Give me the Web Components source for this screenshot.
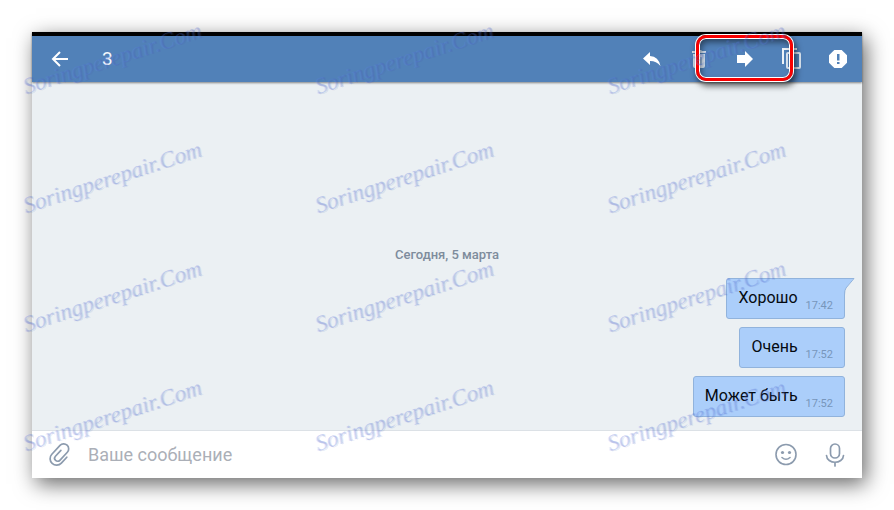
<!DOCTYPE html>
<html lang="ru">
<head>
<meta charset="utf-8">
<meta name="viewport" content="width=device-width, initial-scale=1">
<title>Сообщения</title>
<style>
body { margin: 0; background: #fff; font-family: Roboto, "Liberation Sans", sans-serif; }
</style>
</head>
<body>
<chat-app></chat-app>
<script>
const define = (name, html) => customElements.define(name, class extends HTMLElement {
  constructor() {
    super();
    const t = document.createElement('template');
    t.innerHTML = html;
    this.attachShadow({ mode: 'open' }).append(t.content.cloneNode(true));
  }
  connectedCallback() {
    const button = this.shadowRoot.querySelector('button');
    if (button && this.hasAttribute('label')) button.setAttribute('aria-label', this.getAttribute('label'));
  }
});

define('icon-button', `
<style>
:host { display: block; position: relative; width: 24px; height: 24px; }
button { display: block; width: 24px; height: 24px; padding: 0; border: 0; background: none; color: inherit; cursor: pointer; }
::slotted(svg) { display: block; width: 24px; height: 24px; overflow: visible; }
</style>
<button type="button"><slot></slot></button><slot name="over"></slot>`);

define('focus-ring', `
<style>
:host { position: absolute; z-index: 2; left: -37px; top: -12px; width: 97px; height: 46px; box-sizing: border-box;
  border: 3px solid #f80000; border-radius: 10px; pointer-events: none;
  box-shadow: 0 0 0 1px #fff, inset 0 0 0 1px #fff, 2px 4px 6px 1px rgba(0,0,0,.6), inset 2px 4px 6px rgba(0,0,0,.5); }
</style>`);

define('chat-toolbar', `
<style>
:host { display: block; position: relative; z-index: 1; border-top: 4px solid #000; background: #5181b8; color: #fff; box-shadow: 0 1px 2px rgba(0,0,0,.45); }
header { display: flex; align-items: center; height: 46px; padding: 0 12px 0 16px; }
.count { margin-left: 30px; font-size: 19px; line-height: 24px; color: #f4f8fc; }
nav { display: flex; justify-content: space-between; width: 210px; margin-left: auto; }
.faded { opacity: .75; }
</style>
<header>
  <icon-button label="Назад"><svg viewBox="0 0 24 24" fill="none" stroke="#fff" stroke-width="2"><path d="M20 12H5M12 5L5 12L12 19"/></svg></icon-button>
  <span class="count">3</span>
  <nav>
    <icon-button label="Ответить"><svg viewBox="0 0 24 24" fill="#fff"><path d="M10 5L3 11.5L10 18V14Q16 13.8 20.5 19Q18.5 9.5 10 9Z"/></svg></icon-button>
    <icon-button class="faded" label="Удалить"><svg viewBox="0 0 24 24"><path fill="#fff" d="M5 4h4l1-1h4l1 1h4v2H5zM6 7h12v12q0 2-2 2H8q-2 0-2-2z"/><path d="M9 10h6v8H9z" fill="#b5c8df"/></svg></icon-button>
    <icon-button label="Переслать"><svg viewBox="0 0 24 24" fill="#fff"><path d="M4 8h8V4l8 8-8 8v-4H4z"/></svg><focus-ring slot="over"></focus-ring></icon-button>
    <icon-button label="Копировать"><svg viewBox="0 0 24 24" fill="none" stroke="#fff"><path d="M3 17V2h14" stroke-width="2" opacity=".9"/><rect x="7" y="6" width="13" height="15" rx="1" stroke-width="2" opacity=".8"/></svg></icon-button>
    <icon-button label="Пожаловаться"><svg viewBox="0 0 24 24"><path fill="#fff" d="M8.300 3h7.400L21 8.300v7.400L15.700 21H8.300L3 15.700V8.300z"/><path fill="#5181b8" d="M11 7h2.500v6.500H11zM11 15h2.500v2H11z"/></svg></icon-button>
  </nav>
</header>`);

define('chat-date', `
<style>
:host { display: block; text-align: center; font-size: 13px; line-height: 16px; font-weight: 500; color: #7e8c9c; }
</style>
<slot></slot>`);

define('chat-message', `
<style>
:host { display: flex; position: relative; align-items: center; gap: 8px; height: 41px; box-sizing: border-box; padding: 0 11px 2px;
  border: 1px solid #91b3dc; border-radius: 3px; background: #abcefa; color: #050a10; font-size: 16px; line-height: 20px; }
time { align-self: flex-end; padding-bottom: 2px; font-size: 11px; line-height: 16px; color: #7796bb; }
svg { display: none; position: absolute; right: -11px; top: -1px; width: 12px; height: 17px; }
:host([tail]) svg { display: block; }
:host([tail]) { border-top-right-radius: 0; }
</style>
<span><slot></slot></span><time><slot name="time"></slot></time>
<svg viewBox="0 0 12 17"><path d="M0 0H11L3 10Q1.500 12 1.500 17H0Z" fill="#abcefa"/><path d="M0 .5H11L3 10Q1.500 12 1.500 17" fill="none" stroke="#91b3dc"/></svg>`);

define('chat-history', `
<style>
:host { display: flex; flex: 1; flex-direction: column; justify-content: flex-end; align-items: stretch; gap: 15px; padding: 16px 17px 13px; background: #ebf0f3; }
.list { display: flex; flex-direction: column; align-items: flex-end; gap: 8px; }
</style>
<slot name="date"></slot><div class="list"><slot></slot></div>`);

define('chat-composer', `
<style>
:host { display: block; border-top: 1px solid #dce1e6; background: #fff; color: #93a1b3; }
form { display: flex; align-items: center; height: 47px; padding: 0 15px 0 16px; }
label { flex: 1; min-width: 0; margin-left: 16px; }
input { display: block; box-sizing: border-box; width: 100%; padding: 0; border: 0; outline: 0; background: none; font: 18px/24px Roboto, "Liberation Sans", sans-serif; color: #222; }
input::placeholder { color: #abafb7; opacity: 1; }
.tools { display: flex; gap: 25px; }
</style>
<form>
  <icon-button label="Прикрепить"><svg viewBox="0 0 24 24" fill="none" stroke="#8c9bae" stroke-width="1.700" stroke-linecap="round" stroke-linejoin="round"><path transform="rotate(43 12 12)" d="M18.500 9V17A6.500 6.500 0 0 1 5.500 17V5A5 5 0 0 1 15.500 5V16A3 3 0 0 1 9.500 16V8"/></svg></icon-button>
  <label><input type="text" aria-label="Ваше сообщение" placeholder="Ваше сообщение"></label>
  <div class="tools">
    <icon-button label="Смайлики"><svg viewBox="0 0 24 24" fill="none" stroke="#8c9bae" stroke-width="1.600" stroke-linecap="round"><circle cx="12" cy="11.500" r="10"/><path d="M8 14.500Q12 18 16 14.500"/><g fill="#8c9bae" stroke="none"><circle cx="8.500" cy="9.500" r="1.600"/><circle cx="15.500" cy="9.500" r="1.600"/></g></svg></icon-button>
    <icon-button label="Голосовое сообщение"><svg viewBox="0 0 24 24" fill="none" stroke="#8c9bae" stroke-width="1.700" stroke-linecap="round"><rect x="7.500" y="1" width="9" height="14" rx="4.500"/><path d="M3.500 12.500C4 21.500 20 21.500 20.500 12.500M12 19.500V23"/></svg></icon-button>
  </div>
</form>`);

define('water-mark', `
<style>
:host { display: block; width: 200px; font: italic 23px/26px "Liberation Serif", serif; white-space: nowrap;
  color: rgba(70,100,205,.22); text-shadow: 1px 1px 0 rgba(80,80,170,.12), -1px 0 0 rgba(120,160,255,.14);
  transform: rotate(-18deg); transform-origin: 0 100%; }
</style>
Soringperepair.Com`);

define('water-marks', `
<style>
:host { display: grid; position: absolute; inset: 0; z-index: 3; overflow: hidden; pointer-events: none;
  grid-template-columns: repeat(3, 292px); grid-auto-rows: 119px; align-items: end; padding-left: 28px; margin-top: -19px; }
</style>
${'<water-mark></water-mark>'.repeat(12)}`);

define('chat-app', `
<style>
:host { display: flex; position: relative; box-sizing: border-box; min-height: 100vh; padding: 32px; overflow: hidden; }
main { display: flex; flex: 1; min-width: 0; flex-direction: column; box-shadow: 4px 6px 20px rgba(0,0,0,.6); }
</style>
<main>
  <chat-toolbar></chat-toolbar>
  <chat-history>
    <chat-date slot="date">Сегодня, 5 марта</chat-date>
    <chat-message tail>Хорошо<span slot="time">17:42</span></chat-message>
    <chat-message>Очень<span slot="time">17:52</span></chat-message>
    <chat-message>Может быть<span slot="time">17:52</span></chat-message>
  </chat-history>
  <chat-composer></chat-composer>
</main>
<water-marks></water-marks>`);
</script>
</body>
</html>
